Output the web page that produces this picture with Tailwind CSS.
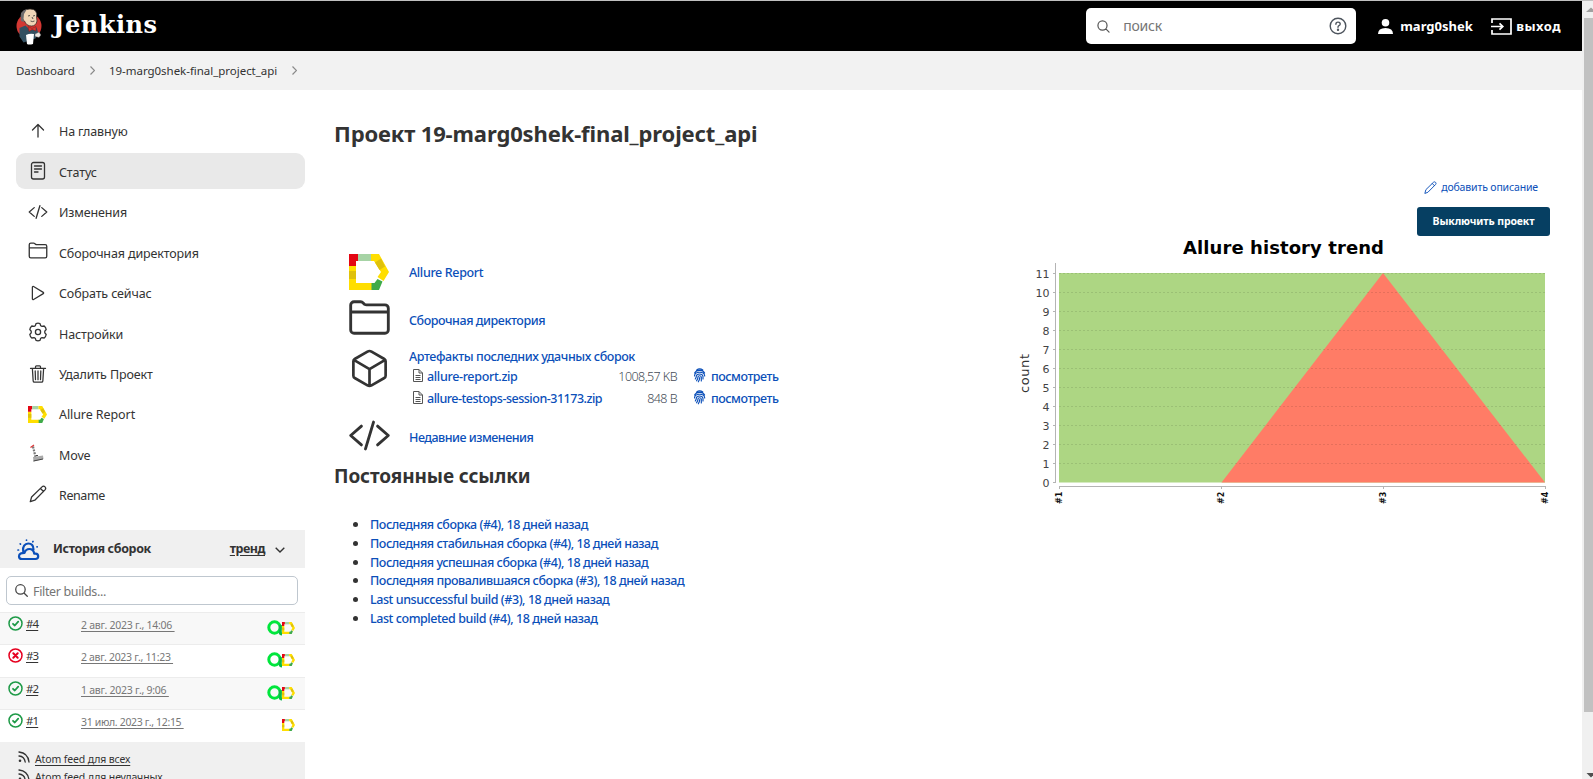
<!DOCTYPE html>
<html lang="ru">
<head>
<meta charset="utf-8">
<title>19-marg0shek-final_project_api [Jenkins]</title>
<script src="https://cdn.jsdelivr.net/npm/@tailwindcss/browser@4"></script>
</head>
<body class="bg-white font-['Noto_Sans',sans-serif] text-[#333] overflow-hidden">
<svg class="hidden">
  <defs>
    <g id="allure">
      <path fill="#ffde00" d="M0 12h7v17h17v7H0z"/>
      <path fill="#dfc10c" d="M0 17h7v8H0z"/>
      <path fill="#e30613" d="M0 0h9v7H7v5H0z"/>
      <path fill="#a6d3a5" d="M9 0h13v7H9z"/>
      <path fill="#ffde00" d="M22 0h8l10 18-5.500 9-6-4L32 18 25 7h-3z"/>
      <path fill="#dfc10c" d="M26 8.500l6-4 4 8-5.500 3.500z"/>
      <path fill="#3fab49" d="M22.500 29h3l3-4 5 2.500L30 36h-7.500z"/>
    </g>
    <g id="code" fill="none" stroke="currentColor" stroke-linecap="round" stroke-linejoin="round" stroke-width="34"><path d="M160 368L32 256l128-112M352 368l128-112-128-112M304 96l-96 320"/></g>
    <g id="folder" fill="none" stroke="currentColor" stroke-linejoin="round" stroke-width="34"><path d="M440 432H72a40 40 0 01-40-40V96a40 40 0 0140-40h75.890a40 40 0 0122.190 6.720l27.840 24.560a40 40 0 0022.190 6.720H440a40 40 0 0140 40v258a40 40 0 01-40 40zM32 178h448"/></g>
    <g id="pencil" fill="none" stroke="currentColor" stroke-linecap="round" stroke-linejoin="round" stroke-width="1.300"><path d="M1.300 16.700l1.300-4.700L13 1.900c1-1 2.100-.9 3 0s.9 2 0 3L5.800 15.200zM11.500 3.500l3 3"/></g>
    <g id="search" fill="none" stroke="currentColor" stroke-linecap="round" stroke-width="42"><path d="M221.090 64a157.090 157.090 0 10157.090 157.090A157.100 157.100 0 00221.090 64zM338.290 338.290L448 448"/></g>
    <g id="ok" fill="none" stroke="#1e9a47" stroke-linecap="round" stroke-linejoin="round"><circle cx="7.500" cy="7.500" r="6.500" stroke-width="1.500"/><path stroke-width="1.800" d="M5 7.800l1.800 1.700 3.400-3.800"/></g>
    <g id="fail" fill="none" stroke="#e6001f" stroke-linecap="round"><circle cx="7.500" cy="7.500" r="6.500" stroke-width="1.500"/><path stroke-width="2" d="M5.300 5.300l4.400 4.400m0-4.400L5.300 9.700"/></g>
    <g id="testops" fill="none" stroke-width="3"><circle cx="7.500" cy="7.500" r="5.700" stroke="#00e63c"/><path stroke="#0bb84a" d="M13.300 5v7.500q0 1.500 1.700 1.500"/></g>
    <g id="doc" fill="none" stroke="#555" stroke-width="1"><path d="M1 .5h5l3.500 3.500v8.500H.5V.5zM6 .5V4h3.500M2.500 6.500h5M2.500 8.500h5M2.500 10.500h5"/></g>
    <g id="finger" fill="none" stroke="#0b4fb9" stroke-linecap="round" stroke-width="1.150"><path d="M2.500 2.200Q5.500-.3 8.800 2M.6 5Q2 2.500 5.600 2.400T10.600 5M.5 8Q.7 4.200 5.600 4.200T10.700 8M1.300 11Q2.300 9.500 2.300 8.300 2.500 6 5.600 6T9 8.500v2.500M2.600 12.800Q4 10.500 4 8.900 4.100 7.700 5.600 7.700T7.300 9v4M4.300 13.800Q5.700 11.500 5.700 9.500"/></g>
    <g id="rss" fill="none" stroke="#333" stroke-linecap="round" stroke-width="1.300"><path d="M1 1q9 1 10 10M1 5q5.500.5 6.200 6"/><circle cx="2" cy="9.800" r="1.300" fill="#333" stroke="none"/></g>
  </defs>
</svg>

<div class="w-[1593px] h-[779px] flex flex-col overflow-hidden whitespace-nowrap">
  <div class="h-px shrink-0 bg-[#c0c0c0]"></div>
  <div class="flex flex-1 min-h-0">
    <div class="w-[1582px] flex flex-col min-h-0">

      <header class="h-[50px] shrink-0 bg-black flex items-center pl-4 pr-[21px] text-white">
        <svg class="w-[27px] h-[37px] shrink-0" viewBox="0 0 27 37">
          <ellipse cx="13" cy="18" rx="12.500" ry="12.500" fill="#d33833"/>
          <path fill="#335061" d="M3.500 20l6-2.500 5 5 6-3 2 6-3 5-12 4-4-6z"/>
          <path fill="#f0d6b7" stroke="#2a2422" stroke-width=".7" d="M6 9Q6 1 14 1t6.500 8l.5 4q-1 5-5.500 5-5 0-7-5-2-1-2.500-4z"/>
          <path fill="#6d6b6d" d="M5 13Q3 2 11 1L8 6l-.5 5 .5 3z"/>
          <path stroke="#333" stroke-width=".8" fill="none" d="M12 8l2-.5M17 8l2-.5M14.500 13q2 1.200 4 0M16 9l1 2"/>
          <path fill="#d33833" stroke="#7a1010" stroke-width=".4" d="M12 18.500l4 2 4-2v4.500l-4-1.500-3 2z"/>
          <path fill="#fff" d="M10 27q4-2 8-1l-1 10q-4 1-6 0z"/>
          <path fill="#e8e4e0" stroke="#444" stroke-width=".4" d="M19 26l4-2 2 3-2 2.500-4-1z"/>
        </svg>
        <div class="ml-[10px] font-['DejaVu_Serif',serif] font-bold text-[24px] leading-8 tracking-[0.550px] -mt-[2px]">Jenkins</div>
        <div class="ml-auto w-[270px] h-[36px] mr-[22px] rounded-[5px] bg-white flex items-center pl-[11px] pr-[9px]">
          <svg class="w-[13px] h-[13px] text-[#555]" viewBox="32 32 448 448"><use href="#search"/></svg>
          <span class="ml-[13px] text-[14px] leading-5 tracking-[-0.2px] text-[#757575]">поиск</span>
          <svg class="ml-auto w-[18px] h-[18px]" viewBox="0 0 18 18" fill="none" stroke="#4d545d" stroke-width="1.400" stroke-linecap="round"><circle cx="9" cy="9" r="7.800"/><path d="M6.900 7.200q0-2.100 2.100-2.100t2.200 1.800Q11.200 8 9.900 8.700q-.9.500-.9 1.500"/><circle cx="9" cy="12.700" r=".5" fill="#4d545d"/></svg>
        </div>
        <svg class="w-[15px] h-[15px] mr-[7px]" viewBox="0 0 15 15" fill="#fff"><circle cx="7.500" cy="3.800" r="3.800"/><path d="M0 15q0-6 7.500-6T15 15z"/></svg>
        <span class="w-[91px] text-[13px] font-bold leading-5">marg0shek</span>
        <svg class="w-[21px] h-[17px] mr-[4px]" viewBox="0 0 21 17" fill="none" stroke="#fff" stroke-width="1.700"><path d="M1 5V1h19v15H1v-4M0 8.500h11.500M8.500 5.300l3.300 3.200-3.300 3.200"/></svg>
        <span class="text-[13px] font-bold leading-5 tracking-[0.5px]">выход</span>
      </header>

      <nav class="h-[39px] shrink-0 bg-[#f2f2f2] flex items-center pl-4 text-[11.500px] leading-5">
        <span class="w-[74px] tracking-[-0.100px]">Dashboard</span>
        <svg class="w-[5px] h-[9px] mr-[14px]" viewBox="0 0 5 9" fill="none" stroke="#8a8a8a" stroke-width="1.200"><path d="M.5.500l4 4-4 4"/></svg>
        <span class="w-[183px] tracking-[-0.030px]">19-marg0shek-final_project_api</span>
        <svg class="w-[5px] h-[9px]" viewBox="0 0 5 9" fill="none" stroke="#8a8a8a" stroke-width="1.200"><path d="M.5.500l4 4-4 4"/></svg>
      </nav>

      <div class="flex flex-1 min-h-0">
        <aside class="w-[305px] shrink-0 flex flex-col">
          <div class="flex flex-col gap-[4.500px] pt-[22.500px] pl-4 text-[12.500px] leading-5 tracking-[-0.130px]">
            <a class="h-[36px] shrink-0 flex items-center pl-[12px]"><svg class="w-[20px] h-[20px] mr-[11px]" viewBox="0 0 20 20" fill="none" stroke="#333" stroke-width="1.300" stroke-linecap="round" stroke-linejoin="round"><path d="M4.500 9L10 3.500 15.500 9M10 3.700V16"/></svg><span class="pt-[2px]">На главную</span></a>
            <a class="h-[36px] shrink-0 flex items-center pl-[12px] rounded-[9px] bg-[#e9e9e9]"><svg class="w-[20px] h-[20px] mr-[11px]" viewBox="0 0 20 20" fill="none" stroke="#333" stroke-width="1.300" stroke-linecap="round"><rect x="3.500" y="1.500" width="13" height="16.500" rx="2"/><path d="M6.500 5h7M6.500 8h7M6.500 11h3.500"/></svg><span class="pt-[4px]">Статус</span></a>
            <a class="h-[36px] shrink-0 flex items-center pl-[12px]"><svg class="w-[20px] h-[20px] mr-[11px]" viewBox="0 0 512 512"><use href="#code"/></svg><span class="pt-[2px]">Изменения</span></a>
            <a class="h-[36px] shrink-0 flex items-center pl-[12px]"><svg class="w-[20px] h-[20px] mr-[11px] -mt-[2px]" viewBox="0 0 512 512"><use href="#folder"/></svg><span class="pt-[4px]">Сборочная директория</span></a>
            <a class="h-[36px] shrink-0 flex items-center pl-[12px]"><svg class="w-[20px] h-[20px] mr-[11px]" viewBox="0 0 512 512" fill="none" stroke="#333" stroke-width="32"><path d="M112 111v290c0 17.440 17 28.520 31 20.160l247.900-148.370c12.120-7.250 12.120-26.330 0-33.580L143 90.840c-14-8.360-31 2.720-31 20.160z"/></svg><span class="pt-[2px]">Собрать сейчас</span></a>
            <a class="h-[36px] shrink-0 flex items-center pl-[12px]"><svg class="w-[20px] h-[20px] mr-[11px] -mt-[2px]" viewBox="0 0 20 20" fill="none" stroke="#333" stroke-width="1.300" stroke-linejoin="round"><circle cx="10" cy="10" r="2.600"/><path d="M8 1.600Q10 .8 12 1.600l.7 2.100 1.300.7 2.200-.4q1.700 1.400 2 3.500L16.800 9.200v1.600l1.400 1.700q-.3 2.100-2 3.500l-2.200-.4-1.300.7-.7 2.100q-2 .8-4 0l-.7-2.100-1.300-.7-2.200.4q-1.700-1.400-2-3.500l1.400-1.700V9.200L1.800 7.500q.3-2.100 2-3.500l2.200.4 1.300-.7z"/></svg><span class="pt-[4px]">Настройки</span></a>
            <a class="h-[36px] shrink-0 flex items-center pl-[12px]"><svg class="w-[20px] h-[20px] mr-[11px]" viewBox="0 0 512 512" fill="none" stroke="#333" stroke-width="32" stroke-linecap="round" stroke-linejoin="round"><path d="M112 112l20 320c.950 18.490 14.400 32 32 32h184c17.670 0 30.870-13.510 32-32l20-320M64 112h384M192 112V72a24 24 0 0124-24h80a24 24 0 0124 24v40M256 176v224M184 176l8 224M328 176l-8 224"/></svg><span class="pt-[2px]">Удалить Проект</span></a>
            <a class="h-[36px] shrink-0 flex items-center pl-[12px]"><svg class="w-[19px] h-[17px] mr-[12px]" viewBox="0 0 40 36" preserveAspectRatio="none"><use href="#allure"/></svg><span class="pt-[2px] tracking-[-0.080px]">Allure Report</span></a>
            <a class="h-[36px] shrink-0 flex items-center pl-[12px]"><svg class="w-[20px] h-[20px] mr-[11px] -mt-[3px]" viewBox="0 0 20 20" fill="none"><path stroke="#777" stroke-width="2.200" stroke-dasharray="2 1" d="M5 3.500L7.500 14"/><path stroke="#d33" stroke-width="1.200" d="M2.500 4.500L6 2"/><path fill="#aaa" d="M5 14l10-1.500.5 3.500-10 2.500z"/><path stroke="#444" d="M5.500 18l9.500-2M8 12.500h2"/></svg><span class="pt-[3px]">Move</span></a>
            <a class="h-[36px] shrink-0 flex items-center pl-[13px] tracking-[-0.400px]"><svg class="w-[18px] h-[18px] mr-[12px] -mt-[2px]" viewBox="0 0 18 18"><use href="#pencil"/></svg><span class="pt-[2px]">Rename</span></a>
          </div>

          <div class="mt-[17px] h-[38px] shrink-0 bg-[#f0f0f0] flex items-center pl-[17px] pr-[20px] text-[12.500px] font-bold leading-5">
            <svg class="w-[23px] h-[22px] mr-[13px] mt-[2px]" viewBox="0 0 23 22" fill="none" stroke="#0b4fb9" stroke-width="2.200" stroke-linejoin="round" stroke-linecap="round"><path d="M5 20h13.500a2.700 2.700 0 000-5.400h-1.300C16.800 12 15 10 12.300 10c-2.800 0-4 1.500-4.800 3.900C4.500 13.900 2 14.300 2 17.200 2 19 3.300 20 5 20zM6.200 12.300C5.200 7.500 8 4.500 11.200 4.500c3 0 5.300 2 5.300 6"/><path stroke-width="1.700" d="M1 11h.500M3.200 4.800l.3.300M9.500 1.200v-.2M16 2.500l-.2.300M20 7.800l.2 0"/></svg>
            <span class="tracking-[-0.370px]">История сборок</span>
            <span class="ml-auto tracking-[-0.500px] underline underline-offset-2">тренд</span>
            <svg class="ml-[10px] w-[10px] h-[6px] mt-[2px]" viewBox="0 0 10 6" fill="none" stroke="#333" stroke-width="1.400"><path d="M.7.700L5 5 9.300.7"/></svg>
          </div>

          <div class="mx-[6px] w-[292px] mt-[8px] mb-[7px] h-[29px] shrink-0 rounded-[5px] border border-[#bfc7cf] flex items-center pl-[8px]">
            <svg class="w-[13px] h-[13px] mr-[5px] text-[#444]" viewBox="40 40 432 432"><use href="#search"/></svg>
            <span class="pt-[2px] text-[12.500px] leading-5 tracking-[-0.350px] text-[#757575]">Filter builds...</span>
          </div>

          <div class="flex flex-col text-[10.500px] text-[#333] leading-5">
            <div class="h-[32.300px] shrink-0 border-t border-[#ececec] bg-[#f8f8f8] flex items-start pl-[8px] pr-[10px]">
              <svg class="mt-[3px] w-[15px] h-[15px] mr-[3px]" viewBox="0 0 15 15"><use href="#ok"/></svg>
              <span class="mt-px w-[55px] text-[11.500px] tracking-[-0.900px] underline underline-offset-2">#4</span>
              <span class="mt-[2px] tracking-[-0.250px] text-[#777] underline underline-offset-2 whitespace-pre">2 авг. 2023 г., 14:06 </span>
              <svg class="ml-auto mt-[7px] w-[15px] h-[16px]" viewBox="0 0 15 16"><use href="#testops"/></svg>
              <svg class="mt-[9px] w-[13px] h-[12px]" viewBox="0 0 40 36" preserveAspectRatio="none"><use href="#allure"/></svg>
            </div>
            <div class="h-[32.300px] shrink-0 border-t border-[#ececec] bg-white flex items-start pl-[8px] pr-[10px]">
              <svg class="mt-[3px] w-[15px] h-[15px] mr-[3px]" viewBox="0 0 15 15"><use href="#fail"/></svg>
              <span class="mt-px w-[55px] text-[11.500px] tracking-[-0.900px] underline underline-offset-2">#3</span>
              <span class="mt-[2px] tracking-[-0.320px] text-[#777] underline underline-offset-2 whitespace-pre">2 авг. 2023 г., 11:23 </span>
              <svg class="ml-auto mt-[7px] w-[15px] h-[16px]" viewBox="0 0 15 16"><use href="#testops"/></svg>
              <svg class="mt-[9px] w-[13px] h-[12px]" viewBox="0 0 40 36" preserveAspectRatio="none"><use href="#allure"/></svg>
            </div>
            <div class="h-[32.300px] shrink-0 border-t border-[#ececec] bg-[#f8f8f8] flex items-start pl-[8px] pr-[10px]">
              <svg class="mt-[3px] w-[15px] h-[15px] mr-[3px]" viewBox="0 0 15 15"><use href="#ok"/></svg>
              <span class="mt-px w-[55px] text-[11.500px] tracking-[-0.900px] underline underline-offset-2">#2</span>
              <span class="mt-[2px] tracking-[-0.250px] text-[#777] underline underline-offset-2 whitespace-pre">1 авг. 2023 г., 9:06 </span>
              <svg class="ml-auto mt-[7px] w-[15px] h-[16px]" viewBox="0 0 15 16"><use href="#testops"/></svg>
              <svg class="mt-[9px] w-[13px] h-[12px]" viewBox="0 0 40 36" preserveAspectRatio="none"><use href="#allure"/></svg>
            </div>
            <div class="h-[33.100px] shrink-0 border-t border-[#ececec] bg-white flex items-start pl-[8px] pr-[10px]">
              <svg class="mt-[3px] w-[15px] h-[15px] mr-[3px]" viewBox="0 0 15 15"><use href="#ok"/></svg>
              <span class="mt-px w-[55px] text-[11.500px] tracking-[-0.900px] underline underline-offset-2">#1</span>
              <span class="mt-[2px] tracking-[-0.330px] text-[#777] underline underline-offset-2 whitespace-pre">31 июл. 2023 г., 12:15 </span>
              <svg class="ml-auto mt-[9px] w-[13px] h-[12px]" viewBox="0 0 40 36" preserveAspectRatio="none"><use href="#allure"/></svg>
            </div>
          </div>

          <div class="h-[60px] shrink-0 bg-[#f0f0f0] pt-[8px] pl-[18px] text-[10.500px] leading-[18px] tracking-[-0.130px]">
            <div class="flex"><svg class="mt-px w-[12px] h-[12px] mr-[5px]" viewBox="0 0 12 12"><use href="#rss"/></svg><span class="underline underline-offset-2">Atom feed для всех</span></div>
            <div class="flex"><svg class="mt-px w-[12px] h-[12px] mr-[5px]" viewBox="0 0 12 12"><use href="#rss"/></svg><span class="underline underline-offset-2">Atom feed для неудачных</span></div>
          </div>
        </aside>

        <main class="flex-1 flex pl-[29px]">
          <div class="w-[640px] shrink-0 pt-[28px]">
            <h1 class="text-[22px] font-bold leading-[30px] tracking-[-0.130px]">Проект 19-marg0shek-final_project_api</h1>
            <div class="mt-[100px] pl-[14px] flex flex-col text-[12.500px] leading-5 font-medium text-[#0b4fb9]">
              <div class="h-[48px] flex items-center"><svg class="w-[40px] h-[36px] ml-px mr-[20px]" viewBox="0 0 40 36"><use href="#allure"/></svg><a class="pt-px tracking-[-0.350px]">Allure Report</a></div>
              <div class="h-[48px] flex items-center"><svg class="w-[43px] h-[43px] mr-[18px] -mt-[3px] text-[#333]" viewBox="0 0 512 512"><use href="#folder"/></svg><a class="pt-px tracking-[-0.440px]">Сборочная директория</a></div>
              <div class="flex">
                <svg class="w-[43px] h-[43px] mt-[3px] mr-[18px]" viewBox="0 0 512 512" fill="none" stroke="#333" stroke-width="32" stroke-linecap="round" stroke-linejoin="round"><path d="M448 341.370V170.610A32 32 0 00432.110 143l-152-88.460a47.940 47.940 0 00-48.240 0L79.890 143A32 32 0 0064 170.610v170.760A32 32 0 0079.890 369l152 88.460a48 48 0 0048.240 0l152-88.460A32 32 0 00448 341.370zM69 153.990l187 110 187-110M256 463.990v-200"/></svg>
                <div class="pt-[3px] flex flex-col">
                  <a class="tracking-[-0.410px]">Артефакты последних удачных сборок</a>
                  <div class="flex h-[20px] items-center pl-[4px]"><svg class="w-[10px] h-[13px] mr-[4px] -mt-1" viewBox="0 0 10 13"><use href="#doc"/></svg><a class="w-[175px] tracking-[-0.330px]">allure-report.zip</a><span class="w-[75px] text-right font-light text-[#444c56] tracking-[-0.550px]">1008,57 KB</span><svg class="w-[12px] h-[15px] ml-[17px] mr-[5px] -mt-1" viewBox="0 0 12 15"><use href="#finger"/></svg><a class="tracking-[-0.480px]">посмотреть</a></div>
                  <div class="flex h-[24px] items-center pl-[4px]"><svg class="w-[10px] h-[13px] mr-[4px] -mt-1" viewBox="0 0 10 13"><use href="#doc"/></svg><a class="w-[175px] tracking-[-0.490px]">allure-testops-session-31173.zip</a><span class="w-[75px] text-right font-light text-[#444c56] tracking-[-0.550px]">848 B</span><svg class="w-[12px] h-[15px] ml-[17px] mr-[5px] -mt-1" viewBox="0 0 12 15"><use href="#finger"/></svg><a class="tracking-[-0.480px]">посмотреть</a></div>
                </div>
              </div>
              <div class="h-[52px] flex items-center"><svg class="w-[43px] h-[43px] mr-[18px] -mt-[4px] text-[#333]" viewBox="0 0 512 512"><use href="#code"/></svg><a class="pt-px tracking-[-0.500px]">Недавние изменения</a></div>
            </div>
            <h2 class="text-[19px] font-bold leading-[26px] tracking-[-0.100px]">Постоянные ссылки</h2>
            <ul class="mt-[25px] pl-[36px] list-disc text-[12.500px] leading-[18.800px] font-medium tracking-[-0.440px] marker:text-[#333] marker:text-[15px] text-[#0b4fb9]">
              <li class="h-[18.800px]">Последняя сборка (#4), 18 дней назад</li>
              <li class="h-[18.800px]">Последняя стабильная сборка (#4), 18 дней назад</li>
              <li class="h-[18.800px]">Последняя успешная сборка (#4), 18 дней назад</li>
              <li class="h-[18.800px]">Последняя провалившаяся сборка (#3), 18 дней назад</li>
              <li class="h-[18.800px]">Last unsuccessful build (#3), 18 дней назад</li>
              <li class="h-[18.800px]">Last completed build (#4), 18 дней назад</li>
            </ul>
          </div>
          <div class="flex-1 flex flex-col items-end pt-[87px] pr-[32px]">
            <a class="h-[20px] flex items-center mr-[12px] text-[10.500px] leading-5 tracking-[-0.150px] text-[#0b4fb9]"><svg class="w-[13px] h-[13px] mr-[4px]" viewBox="0 0 18 18"><use href="#pencil"/></svg>добавить описание</a>
            <button class="mt-[10px] h-[29px] w-[133px] rounded-[3px] bg-[#063f62] text-white text-[10.500px] font-bold leading-5 tracking-[-0.120px] pb-[2px]">Выключить проект</button>
            <svg class="w-[550px] h-[275px] -mr-[9px] -mt-[1px] shrink-0" viewBox="1009 235 550 275" font-family="DejaVu Sans, sans-serif">
              <text x="1183" y="254" font-size="18" font-weight="700" textLength="201">Allure history trend</text>
              <path fill="#add683" d="M1059 273h486v209.500h-486z"/>
              <path fill="#ff7c66" d="M1221.500 482.500L1383 273l162 209.500z"/>
              <path fill="none" stroke="#000" stroke-opacity=".1" stroke-dasharray="2 2" d="M1059 273.500h486m-486 19h486m-486 19h486m-486 19h486m-486 19h486m-486 19h486m-486 19h486m-486 19h486m-486 19h486m-486 19h486m-486 19h486"/>
              <path fill="none" stroke="#b4b4b4" d="M1055.500 263v220M1059 486.500h487M1059.500 487v2M1221.500 487v2M1383.500 487v2M1545.500 487v2M1053 273.500h2m-2 19h2m-2 19h2m-2 19h2m-2 19h2m-2 19h2m-2 19h2m-2 19h2m-2 19h2m-2 19h2m-2 19h2m-2 19h2"/>
              <g font-size="11" fill="#444" text-anchor="end">
                <text x="1049.500" y="277.500">11</text><text x="1049.500" y="296.500">10</text><text x="1049.500" y="315.500">9</text><text x="1049.500" y="334.500">8</text><text x="1049.500" y="353.500">7</text><text x="1049.500" y="372.500">6</text><text x="1049.500" y="391.500">5</text><text x="1049.500" y="410.500">4</text><text x="1049.500" y="429.500">3</text><text x="1049.500" y="448.500">2</text><text x="1049.500" y="467.500">1</text><text x="1049.500" y="486.500">0</text>
              </g>
              <text transform="translate(1028.500 393) rotate(-90)" font-size="13" fill="#333" textLength="39">count</text>
              <g font-size="8" font-weight="700" fill="#111">
                <text transform="translate(1062 504) rotate(-90)">#1</text><text transform="translate(1224 504) rotate(-90)">#2</text><text transform="translate(1386 504) rotate(-90)">#3</text><text transform="translate(1548 504) rotate(-90)">#4</text>
              </g>
            </svg>
          </div>
        </main>
      </div>
    </div>

    <div class="w-[11px] bg-[#f0f0f0] flex flex-col items-end overflow-hidden">
      <svg class="w-[9px] h-[17px] shrink-0" viewBox="0 0 9 17"><path fill="#a0a0a0" d="M2 11l5-4.500 5 4.500z"/></svg>
      <div class="w-[9px] h-[694px] shrink-0 bg-[#c1c1c1]"></div>
      <svg class="mt-auto w-[9px] h-[17px] shrink-0" viewBox="0 0 9 17"><path fill="#505050" d="M2.500 11h9l-4.500 4.500z"/></svg>
    </div>
  </div>
</div>
</body>
</html>
